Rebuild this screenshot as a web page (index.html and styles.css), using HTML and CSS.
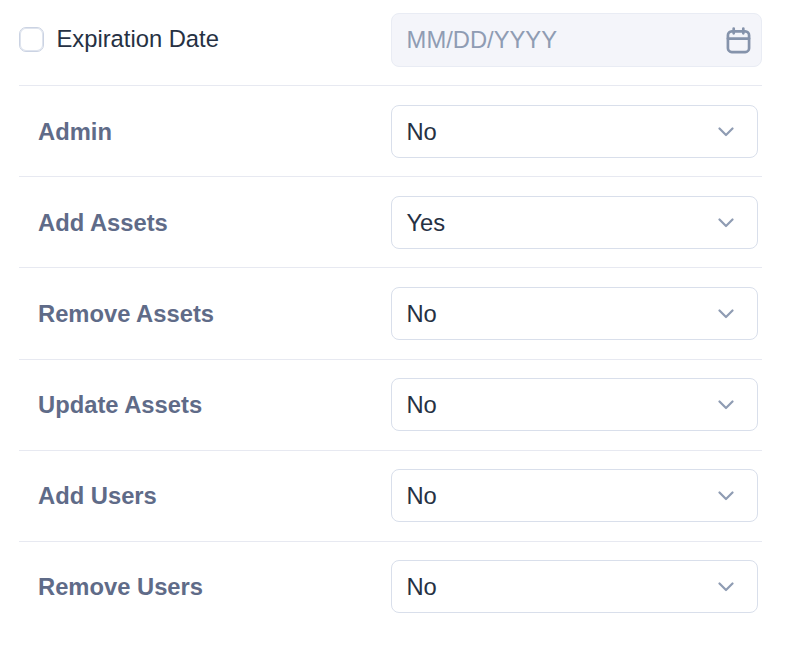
FILE: index.html
```html
<!DOCTYPE html>
<html lang="en">
<head>
    <meta charset="UTF-8">
    <meta name="viewport" content="width=device-width, initial-scale=1.0">
    <title>User Permissions</title>
    <link rel="stylesheet" href="styles.css">
</head>
<body>
    <div class="panel">
        <div class="row row-date">
            <label class="check-label">
                <span class="checkbox"></span>
                Expiration Date
            </label>
            <div class="date-field">
                <span>MM/DD/YYYY</span>
                <svg class="calendar" viewBox="0 0 26 28" width="25" height="27" fill="none" stroke="currentColor" stroke-width="2.8" stroke-linecap="round" stroke-linejoin="round">
                    <rect x="2" y="4.5" width="22" height="21.5" rx="4"/>
                    <path d="M2 12h22M8 1.5v5M18 1.5v5"/>
                </svg>
            </div>
        </div>

        <div class="row">
            <span class="perm-name">Admin</span>
            <div class="select-box">No
                <svg class="chevron" viewBox="0 0 16 10" width="16" height="10"><path d="M1.5 1.5L8 8l6.5-6.5"/></svg>
            </div>
        </div>
        <div class="row">
            <span class="perm-name">Add Assets</span>
            <div class="select-box">Yes
                <svg class="chevron" viewBox="0 0 16 10" width="16" height="10"><path d="M1.5 1.5L8 8l6.5-6.5"/></svg>
            </div>
        </div>
        <div class="row">
            <span class="perm-name">Remove Assets</span>
            <div class="select-box">No
                <svg class="chevron" viewBox="0 0 16 10" width="16" height="10"><path d="M1.5 1.5L8 8l6.5-6.5"/></svg>
            </div>
        </div>
        <div class="row">
            <span class="perm-name">Update Assets</span>
            <div class="select-box">No
                <svg class="chevron" viewBox="0 0 16 10" width="16" height="10"><path d="M1.5 1.5L8 8l6.5-6.5"/></svg>
            </div>
        </div>
        <div class="row">
            <span class="perm-name">Add Users</span>
            <div class="select-box">No
                <svg class="chevron" viewBox="0 0 16 10" width="16" height="10"><path d="M1.5 1.5L8 8l6.5-6.5"/></svg>
            </div>
        </div>
        <div class="row">
            <span class="perm-name">Remove Users</span>
            <div class="select-box">No
                <svg class="chevron" viewBox="0 0 16 10" width="16" height="10"><path d="M1.5 1.5L8 8l6.5-6.5"/></svg>
            </div>
        </div>
    </div>
</body>
</html>
```

FILE: styles.css
```css
body {
    margin: 0;
    background-color: #ffffff;
    font-family: "Liberation Sans", Arial, sans-serif;
    color: #263143;
}
.panel {
    width: 743px;
    margin-left: 19px;
    padding-top: 13px;
}
.row {
    display: flex;
    align-items: center;
    justify-content: space-between;
    height: 53.2px;
    padding: 18.3px 4px 18.6px 19px;
    border-top: 1px solid #e7e9f1;
}
.row-date {
    height: 54px;
    padding: 0 0 18.3px 0;
    border-top: none;
}
.check-label {
    display: flex;
    align-items: center;
    gap: 12.5px;
    font-size: 23.75px;
    margin-top: -2px;
}
.checkbox {
    width: 23px;
    height: 23px;
    margin-top: 1px;
    border: 1px solid #cbd3e3;
    box-shadow: inset 0 0 0 1px #dfe4ee;
    border-radius: 7px;
    background-color: #ffffff;
}
.date-field {
    display: flex;
    align-items: center;
    justify-content: space-between;
    box-sizing: border-box;
    width: 371px;
    height: 54px;
    padding: 0 10px 0 14.6px;
    border: 1px solid #e9ecf4;
    border-radius: 8px;
    background-color: #f4f5fa;
    color: #8f9cb3;
    font-size: 23.75px;
}
.calendar {
    color: #8593ab;
}
.perm-name {
    padding-top: 0.8px;
    font-size: 23.75px;
    font-weight: bold;
    color: #5f6b88;
}
.select-box {
    display: flex;
    align-items: center;
    justify-content: space-between;
    box-sizing: border-box;
    width: 367px;
    height: 53.2px;
    padding: 0.8px 23px 0 14.4px;
    border: 1px solid #d9dfeb;
    border-radius: 8px;
    font-size: 23.75px;
}
.chevron {
    fill: none;
    stroke: #8f9cb3;
    stroke-width: 2.2;
    stroke-linecap: round;
    stroke-linejoin: round;
}
```
